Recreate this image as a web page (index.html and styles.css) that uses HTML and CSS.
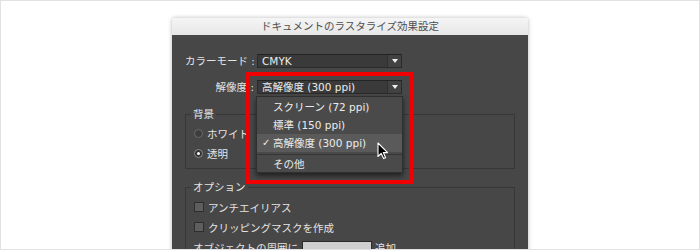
FILE: index.html
```html
<!DOCTYPE html>
<html lang="ja">
<head>
    <meta charset="UTF-8">
    <meta name="viewport" content="width=device-width, initial-scale=1.0">
    <title>ドキュメントのラスタライズ効果設定</title>
    <link rel="stylesheet" href="styles.css">
</head>
<body>
    <div class="frame">
        <div class="dialog">
            <div class="titlebar">ドキュメントのラスタライズ効果設定</div>
            <div class="panel">
                <div class="row">
                    <span class="label">カラーモード :</span>
                    <div class="select"><span class="value">CMYK</span><span class="arrow"></span></div>
                </div>
                <div class="row">
                    <span class="label">解像度 :</span>
                    <div class="select"><span class="value">高解像度 (300 ppi)</span><span class="arrow"></span></div>
                </div>
                <fieldset class="group group-bg">
                    <legend>背景</legend>
                    <div class="option"><span class="radio"></span>ホワイト</div>
                    <div class="option"><span class="radio checked"></span>透明</div>
                </fieldset>
                <fieldset class="group group-opt">
                    <legend>オプション</legend>
                    <div class="option"><span class="checkbox"></span>アンチエイリアス</div>
                    <div class="option"><span class="checkbox"></span>クリッピングマスクを作成</div>
                    <div class="option add-row">オブジェクトの周囲に<span class="field"></span>追加</div>
                </fieldset>
            </div>

            <!-- 開いた状態のプルダウン -->
            <ul class="menu">
                <li>スクリーン (72 ppi)</li>
                <li>標準 (150 ppi)</li>
                <li class="active"><span class="check">✓</span>高解像度 (300 ppi)</li>
                <li class="sep"></li>
                <li>その他</li>
            </ul>
            <div class="highlight"></div>
            <svg class="cursor" width="12" height="18" viewBox="0 0 12 18">
                <path d="M1 1 L1 14.5 L4.2 11.4 L6.6 16.6 L8.6 15.7 L6.3 10.6 L10.6 10.6 Z" fill="#000" stroke="#fff" stroke-width="1.1" stroke-linejoin="round"/>
            </svg>
        </div>
    </div>
</body>
</html>
```

FILE: styles.css
```css
body {
    margin: 0;
    background-color: #ffffff;
    font-family: "DejaVu Sans", "Noto Sans CJK JP", sans-serif;
    font-size: 10.5px;
    overflow: hidden;
}
.frame {
    width: 700px;
    height: 250px;
    box-sizing: border-box;
    border: 1px solid #e2e2e2;
    padding-top: 17px;
    display: flex;
    justify-content: center;
    overflow: hidden;
}
.dialog {
    position: relative;
    width: 356px;
    height: 260px;
    box-shadow: 0 0 4px rgba(0, 0, 0, 0.28);
    border-radius: 3px 3px 0 0;
}
.titlebar {
    height: 17px;
    line-height: 17px;
    text-align: center;
    color: #4e4e4e;
    background: linear-gradient(#f5f5f5, #e7e7e7);
    border-radius: 3px 3px 0 0;
}
.panel {
    background-color: #474747;
    color: #e4e4e4;
    padding: 19px 13px 0;
    height: 240px;
}
.row {
    display: grid;
    grid-template-columns: 72px 145px;
    align-items: center;
    height: 14px;
    line-height: 14px;
}
.row + .row {
    margin-top: 12px;
}
.label {
    text-align: right;
    padding-right: 3px;
    white-space: nowrap;
}
.select {
    display: flex;
    height: 14px;
    box-sizing: border-box;
    background-color: #3a3a3a;
    border: 1px solid #2b2b2b;
    border-top-color: #232323;
}
.select .value {
    flex: 1;
    padding-left: 4px;
    line-height: 12px;
    color: #ececec;
    white-space: nowrap;
}
.select .arrow {
    width: 13px;
    border-left: 1px solid #2e2e2e;
    background-color: #424242;
    display: flex;
    align-items: center;
    justify-content: center;
}
.select .arrow::after {
    content: "";
    border-left: 3px solid transparent;
    border-right: 3px solid transparent;
    border-top: 4px solid #f0f0f0;
}
.group {
    margin: 0;
    min-width: 0;
    border: 1px solid #373737;
    padding: 2px 0 5px 8px;
}
.group legend {
    padding: 0 2px;
    margin-left: -3px;
    line-height: 14px;
}
.group-bg {
    margin-top: 13px;
}
.group-opt {
    margin-top: 11px;
    padding-top: 3px;
}
.option {
    display: flex;
    align-items: center;
    height: 20px;
    white-space: nowrap;
}
.radio {
    width: 9px;
    height: 9px;
    box-sizing: border-box;
    border-radius: 50%;
    border: 1px solid #6a6a6a;
    background-color: #3d3d3d;
    margin-right: 4px;
    display: flex;
    align-items: center;
    justify-content: center;
}
.radio.checked {
    border-color: #8a8a8a;
    background-color: #333333;
}
.radio.checked::after {
    content: "";
    width: 3px;
    height: 3px;
    border-radius: 50%;
    background-color: #ffffff;
}
.checkbox {
    width: 8px;
    height: 8px;
    border: 1px solid #2e2e2e;
    background-color: #5e5e5e;
    margin-right: 4px;
}
.add-row {
    margin-left: -1px;
}
.field {
    display: inline-block;
    width: 70px;
    height: 16px;
    margin: 0 3px 0 4px;
    box-sizing: border-box;
    border: 1px solid #2a2a2a;
    background-color: #cfcfcf;
    align-self: flex-end;
}
.menu {
    position: absolute;
    left: 84px;
    top: 78px;
    width: 147px;
    margin: 0;
    padding: 1px 0 1px;
    list-style: none;
    box-sizing: border-box;
    background-color: #4a4a4a;
    border: 1px solid #2f2f2f;
    box-shadow: 0 3px 5px rgba(0, 0, 0, 0.55);
    color: #ececec;
}
.menu li {
    position: relative;
    height: 18px;
    line-height: 18px;
    padding-left: 16px;
    white-space: nowrap;
}
.menu li.active {
    background-color: #5a5a5a;
}
.menu li.sep {
    height: 1px;
    margin: 2px 0;
    padding: 0;
    background-color: #353535;
}
.menu li:last-child {
    height: 14px;
    line-height: 14px;
}
.check {
    position: absolute;
    left: 5px;
    top: 0;
    font-size: 10px;
}
.highlight {
    position: absolute;
    left: 74px;
    top: 54px;
    width: 167px;
    height: 112px;
    box-sizing: border-box;
    border: 4px solid #f00000;
}
.cursor {
    position: absolute;
    left: 205px;
    top: 124px;
}
```
